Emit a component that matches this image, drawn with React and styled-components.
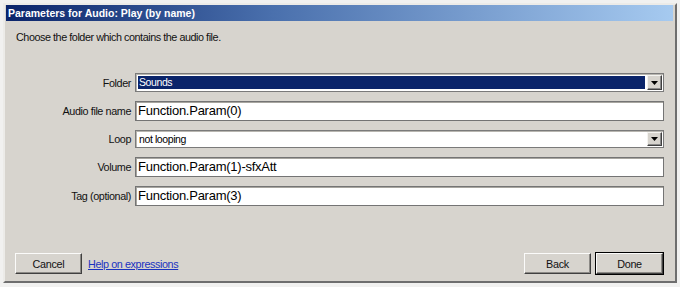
import React from "react";
import styled, { createGlobalStyle } from "styled-components";

const Global = createGlobalStyle`
  html, body { margin: 0; padding: 0; background: #f1f1f0; }
  body { font-family: "Liberation Sans", Arial, sans-serif; }
  #root { padding: 3px 3px 4px 3px; }
`;

const Panel = styled.div`
  box-sizing: border-box;
  width: 674px;
  height: 280px;
  background: #d7d4ce;
  border-top: 2px solid #ecebe8;
  border-left: 2px solid #ecebe8;
  border-right: 2px solid #6e6e6e;
  border-bottom: 2px solid #6e6e6e;
  display: flex;
  flex-direction: column;
`;

const TitleBar = styled.div`
  height: 16px;
  margin: 0 2px 0 1px;
  background: linear-gradient(to right, #0a246a 0%, #4a70ad 40%, #a6caf0 100%);
  color: #fff;
  font-weight: bold;
  font-size: 10.5px;
  line-height: 16px;
  padding-left: 2px;
  white-space: nowrap;
`;

const Body = styled.div`
  flex: 1;
  display: flex;
  flex-direction: column;
  padding: 10px 12px 7px 10px;
`;

const Description = styled.div`
  font-size: 10.8px;
  letter-spacing: -0.45px;
  line-height: 13px;
  color: #111;
  padding-left: 1px;
`;

const Form = styled.div`
  display: grid;
  grid-template-columns: 116px 529px;
  column-gap: 4px;
  row-gap: 9px;
  margin-top: 29px;
  align-items: center;
`;

const Label = styled.div`
  font-size: 10.8px;
  letter-spacing: -0.4px;
  text-align: right;
  color: #111;
  white-space: nowrap;
`;

const Combo = styled.div`
  box-sizing: border-box;
  height: ${(p) => p.$h}px;
  display: flex;
  background: #fff;
  border: 1px solid #7a7a7a;
  box-shadow: inset 1px 1px 0 #b8b6b0;
  padding: 1px;
`;

const ComboValue = styled.div`
  flex: 1;
  margin: 1px 2px 1px 1px;
  padding-left: 1px;
  font-size: 10.5px;
  letter-spacing: -0.4px;
  line-height: ${(p) => p.$h - 6}px;
  background: ${(p) => (p.$selected ? "#0a246a" : "transparent")};
  color: ${(p) => (p.$selected ? "#fff" : "#000")};
  white-space: nowrap;
`;

const DropButton = styled.div`
  box-sizing: border-box;
  width: 15px;
  background: #d7d4ce;
  border-top: 1px solid #f4f3f0;
  border-left: 1px solid #f4f3f0;
  border-right: 1px solid #404040;
  border-bottom: 1px solid #404040;
  box-shadow: inset -1px -1px 0 #8a8a8a;
  display: flex;
  align-items: center;
  justify-content: center;
`;

const Field = styled.div`
  box-sizing: border-box;
  height: 20px;
  background: #fff;
  border: 1px solid #747474;
  box-shadow: inset 1px 1px 0 #a8a6a0;
  font-size: 13px;
  letter-spacing: -0.25px;
  line-height: 18px;
  padding-left: 2px;
  color: #000;
  white-space: nowrap;
`;

const Footer = styled.div`
  margin-top: auto;
  display: flex;
  align-items: center;
`;

const Button = styled.div`
  box-sizing: border-box;
  width: 67px;
  height: 21px;
  background: #d7d4ce;
  border-top: 1px solid #fbfbfa;
  border-left: 1px solid #fbfbfa;
  border-right: 1px solid #404040;
  border-bottom: 1px solid #404040;
  box-shadow: inset -1px -1px 0 #8c8a86;
  outline: ${(p) => (p.$default ? "1px solid #000" : "none")};
  font-size: 10.8px;
  letter-spacing: -0.3px;
  color: #111;
  display: flex;
  align-items: center;
  justify-content: center;
`;

const HelpLink = styled.a`
  margin-left: 6px;
  font-size: 10.8px;
  letter-spacing: -0.4px;
  color: #1a33c0;
  text-decoration: underline;
  cursor: pointer;
`;

const Spacer = styled.div`
  flex: 1;
`;

const RightButtons = styled.div`
  display: flex;
  gap: 5px;
`;

const Arrow = () => (
  <svg width="7" height="4" viewBox="0 0 7 4">
    <path d="M0 0h7L3.5 4z" fill="#000" />
  </svg>
);

const ComboBox = ({ value, selected, h }) => (
  <Combo $h={h}>
    <ComboValue $selected={selected} $h={h}>
      {value}
    </ComboValue>
    <DropButton>
      <Arrow />
    </DropButton>
  </Combo>
);

export default function App() {
  return (
    <>
      <Global />
      <Panel>
        <TitleBar>Parameters for Audio: Play (by name)</TitleBar>
        <Body>
          <Description>Choose the folder which contains the audio file.</Description>
          <Form>
            <Label>Folder</Label>
            <ComboBox value="Sounds" selected h={19} />
            <Label>Audio file name</Label>
            <Field>Function.Param(0)</Field>
            <Label>Loop</Label>
            <ComboBox value="not looping" h={18} />
            <Label>Volume</Label>
            <Field>Function.Param(1)-sfxAtt</Field>
            <Label>Tag (optional)</Label>
            <Field>Function.Param(3)</Field>
          </Form>
          <Footer>
            <Button>Cancel</Button>
            <HelpLink>Help on expressions</HelpLink>
            <Spacer />
            <RightButtons>
              <Button>Back</Button>
              <Button $default>Done</Button>
            </RightButtons>
          </Footer>
        </Body>
      </Panel>
    </>
  );
}
